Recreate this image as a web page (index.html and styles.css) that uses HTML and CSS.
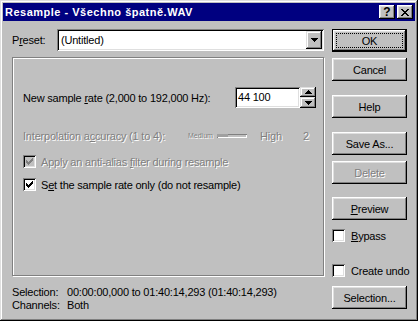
FILE: index.html
```html
<!DOCTYPE html>
<html lang="cs">
<head>
    <meta charset="UTF-8">
    <title>Resample</title>
    <link rel="stylesheet" href="styles.css">
</head>
<body>
    <div class="window">
        <div class="titlebar">
            <span class="title">Resample - Všechno špatně.WAV</span>
            <div class="title-buttons">
                <span class="tbtn help-btn">?</span>
                <span class="tbtn">
                    <svg width="8" height="7" viewBox="0 0 8 7" shape-rendering="crispEdges"><path d="M0 0h2v1h-2zM6 0h2v1h-2zM1 1h2v1h-2zM5 1h2v1h-2zM2 2h4v1h-4zM3 3h2v1h-2zM2 4h4v1h-4zM1 5h2v1h-2zM5 5h2v1h-2zM0 6h2v1h-2zM6 6h2v1h-2z" fill="#000"/></svg>
                </span>
            </div>
        </div>
        <div class="content">
            <div class="main">
                <div class="preset-row">
                    <span class="preset-label">P<u>r</u>eset:</span>
                    <div class="combo">
                        <span class="combo-text">(Untitled)</span>
                        <span class="combo-btn">
                            <svg width="7" height="4" viewBox="0 0 7 4" shape-rendering="crispEdges"><path d="M0 0h7v1h-7zM1 1h5v1h-5zM2 2h3v1h-3zM3 3h1v1h-1z" fill="#000"/></svg>
                        </span>
                    </div>
                </div>

                <div class="panel">
                    <div class="rate-row">
                        <span class="rate-label">New sample <u>r</u>ate (2,000 to 192,000 Hz):</span>
                        <div class="edit">44 100</div>
                        <div class="spin">
                            <span class="spin-btn up">
                                <svg width="7" height="4" viewBox="0 0 7 4" shape-rendering="crispEdges"><path d="M3 0h1v1h-1zM2 1h3v1h-3zM1 2h5v1h-5zM0 3h7v1h-7z" fill="#000"/></svg>
                            </span>
                            <span class="spin-btn down">
                                <svg width="7" height="4" viewBox="0 0 7 4" shape-rendering="crispEdges"><path d="M0 0h7v1h-7zM1 1h5v1h-5zM2 2h3v1h-3zM3 3h1v1h-1z" fill="#000"/></svg>
                            </span>
                        </div>
                    </div>

                    <div class="interp-row disabled">
                        <span class="interp-label">Interpolation a<u>c</u>curacy (1 to 4):</span>
                        <span class="scale-min">Medium</span>
                        <span class="slider"><span class="slider-fill"></span></span>
                        <span class="scale-max">High</span>
                        <span class="scale-value">2</span>
                    </div>

                    <div class="check disabled first">
                        <span class="box checked"><svg width="7" height="7" viewBox="0 0 7 7" shape-rendering="crispEdges"><path d="M6 0h1v1h-1zM5 1h2v1h-2zM0 2h1v1h-1zM4 2h3v1h-3zM0 3h2v1h-2zM3 3h3v1h-3zM0 4h5v1h-5zM1 5h3v1h-3zM2 6h1v1h-1z"/></svg></span>
                        <span>Apply an anti-alias <u>f</u>ilter during resample</span>
                    </div>
                    <div class="check second">
                        <span class="box checked"><svg width="7" height="7" viewBox="0 0 7 7" shape-rendering="crispEdges"><path d="M6 0h1v1h-1zM5 1h2v1h-2zM0 2h1v1h-1zM4 2h3v1h-3zM0 3h2v1h-2zM3 3h3v1h-3zM0 4h5v1h-5zM1 5h3v1h-3zM2 6h1v1h-1z"/></svg></span>
                        <span>S<u>e</u>t the sample rate only (do not resample)</span>
                    </div>
                </div>

                <div class="info">
                    <div class="info-line"><span class="info-label">Selection:</span><span>00:00:00,000 to 01:40:14,293 (01:40:14,293)</span></div>
                    <div class="info-line"><span class="info-label">Channels:</span><span>Both</span></div>
                </div>
            </div>

            <div class="side">
                <div class="btn default">OK</div>
                <div class="btn gap-sm">Cancel</div>
                <div class="btn gap-lg">Help</div>
                <div class="btn gap-lg">Save As...</div>
                <div class="btn gap-sm disabled">Delete</div>
                <div class="btn preview"><span><u>P</u>review</span></div>
                <div class="check bypass">
                    <span class="box"></span>
                    <span><u>B</u>ypass</span>
                </div>
                <div class="check undo">
                    <span class="box"></span>
                    <span>Create undo</span>
                </div>
                <div class="btn selection">Selection...</div>
            </div>
        </div>
    </div>
</body>
</html>
```

FILE: styles.css
```css
* {
    box-sizing: border-box;
}
body {
    margin: 0;
    font-family: "Liberation Sans", Arial, sans-serif;
    font-size: 11px;
    letter-spacing: -0.2px;
    color: #000;
    background: #c0c0c0;
}
u {
    text-decoration-thickness: 1px;
    text-underline-offset: 1px;
}
.window {
    width: 418px;
    height: 321px;
    padding: 3px;
    background: #c0c0c0;
    box-shadow: inset -1px -1px #000, inset 1px 1px #dfdfdf, inset -2px -2px #808080, inset 2px 2px #fff;
    display: flex;
    flex-direction: column;
}

/* title bar */
.titlebar {
    height: 18px;
    background: #000080;
    color: #fff;
    display: flex;
    align-items: center;
    justify-content: space-between;
    padding: 0 2px;
}
.title {
    font-weight: bold;
    letter-spacing: 0.5px;
}
.title-buttons {
    display: flex;
    gap: 2px;
}
.tbtn {
    width: 16px;
    height: 14px;
    background: #c0c0c0;
    color: #000;
    display: flex;
    align-items: center;
    justify-content: center;
    box-shadow: inset -1px -1px #000, inset 1px 1px #fff, inset -2px -2px #808080, inset 2px 2px #dfdfdf;
}
.help-btn {
    font-weight: bold;
    font-size: 12px;
    line-height: 14px;
    letter-spacing: 0;
}

/* layout */
.content {
    display: flex;
    gap: 8px;
    padding: 8px 8px 0 9px;
}
.main {
    width: 312px;
    display: flex;
    flex-direction: column;
}
.side {
    width: 75px;
    display: flex;
    flex-direction: column;
}

/* preset */
.preset-row {
    display: flex;
    align-items: center;
    height: 22px;
}
.preset-label {
    width: 45px;
}
.combo {
    flex: 1;
    height: 22px;
    background: #fff;
    padding: 2px;
    display: flex;
    align-items: center;
    box-shadow: inset 1px 1px #808080, inset -1px -1px #fff, inset 2px 2px #000, inset -2px -2px #dfdfdf;
}
.combo-text {
    padding-left: 2px;
}
.combo-btn {
    margin-left: auto;
    width: 16px;
    height: 18px;
    background: #c0c0c0;
    display: flex;
    align-items: center;
    justify-content: center;
    box-shadow: inset -1px -1px #000, inset 1px 1px #dfdfdf, inset -2px -2px #808080, inset 2px 2px #fff;
}

/* etched frame */
.panel {
    margin-top: 6px;
    height: 219px;
    border: 1px solid #808080;
    box-shadow: 1px 1px 0 #fff, inset 1px 1px 0 #fff;
    padding: 29px 0 0 10px;
}
.rate-row {
    display: flex;
    align-items: center;
    height: 21px;
}
.rate-label {
    width: 212px;
}
.edit {
    width: 65px;
    height: 21px;
    background: #fff;
    padding: 0 3px;
    line-height: 21px;
    box-shadow: inset 1px 1px #808080, inset -1px -1px #fff, inset 2px 2px #000, inset -2px -2px #dfdfdf;
}
.spin {
    width: 16px;
    height: 21px;
    display: flex;
    flex-direction: column;
}
.spin-btn {
    background: #c0c0c0;
    display: flex;
    align-items: center;
    justify-content: center;
    box-shadow: inset -1px -1px #000, inset 1px 1px #dfdfdf, inset -2px -2px #808080, inset 2px 2px #fff;
}
.spin-btn.up {
    height: 10px;
}
.spin-btn.down {
    height: 11px;
}

.interp-row {
    display: flex;
    align-items: center;
    height: 13px;
    margin-top: 21px;
}
.interp-label {
    width: 165px;
}
.scale-min {
    width: 29px;
    font-size: 7px;
    letter-spacing: 0;
}
.slider {
    width: 30px;
    height: 4px;
    display: flex;
    box-shadow: inset 1px 1px #808080, inset -1px -1px #fff;
}
.slider-fill {
    width: 11px;
    height: 3px;
    background: #a0a0a0;
}
.scale-max {
    margin-left: 13px;
    width: 20px;
}
.scale-value {
    margin-left: 23px;
}

.disabled {
    color: #808080;
    text-shadow: 1px 1px 0 #fff;
}

/* checkboxes */
.check {
    display: flex;
    align-items: center;
    gap: 5px;
    height: 13px;
    white-space: nowrap;
}
.check.first {
    margin-top: 13px;
}
.check.second {
    margin-top: 10px;
}
.box {
    flex: none;
    width: 13px;
    height: 13px;
    background: #fff;
    padding: 3px;
    display: flex;
    box-shadow: inset 1px 1px #808080, inset -1px -1px #fff, inset 2px 2px #000, inset -2px -2px #dfdfdf;
}
.box svg {
    fill: #000;
}
.disabled .box {
    background: #c0c0c0;
}
.disabled .box svg {
    fill: #808080;
}
.check.bypass {
    margin-top: 9px;
    gap: 6px;
}
.check.undo {
    margin-top: 22px;
    gap: 6px;
}

/* buttons */
.btn {
    height: 23px;
    background: #c0c0c0;
    display: flex;
    align-items: center;
    justify-content: center;
    box-shadow: inset -1px -1px #000, inset 1px 1px #fff, inset -2px -2px #808080, inset 2px 2px #dfdfdf;
}
.btn.default {
    border: 1px solid #000;
    outline: 1px dotted #000;
    outline-offset: -5px;
}
.btn.gap-sm {
    margin-top: 6px;
}
.btn.gap-lg {
    margin-top: 14px;
}
.btn.preview {
    margin-top: 13px;
}
.btn.selection {
    margin-top: 9px;
}

/* info lines */
.info {
    margin-top: 10px;
}
.info-line {
    display: flex;
    line-height: 13px;
}
.info-label {
    width: 55px;
}
```
